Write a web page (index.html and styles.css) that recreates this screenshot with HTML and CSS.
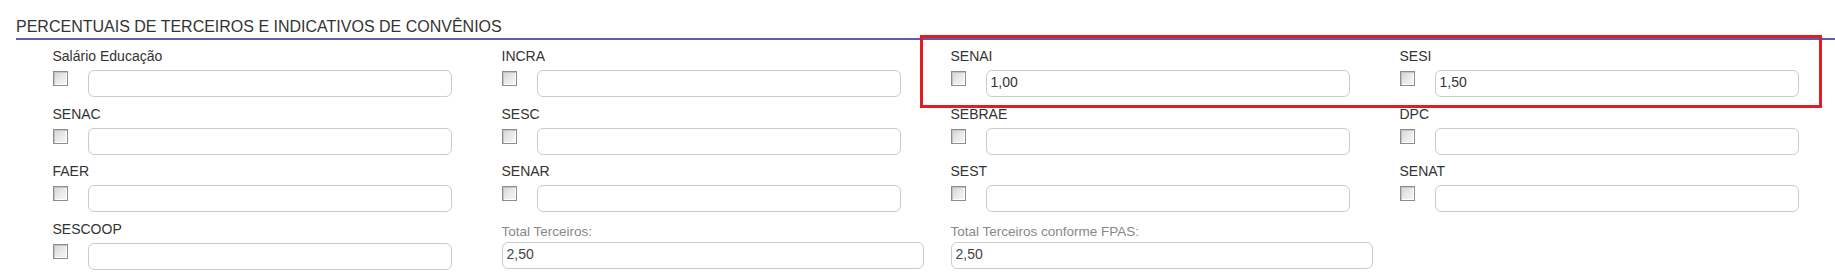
FILE: index.html
```html
<!DOCTYPE html>
<html lang="pt-BR">
<head>
  <meta charset="UTF-8">
  <title>Percentuais de Terceiros</title>
  <link rel="stylesheet" href="styles.css">
</head>
<body>
  <h2 class="titulo">PERCENTUAIS DE TERCEIROS E INDICATIVOS DE CONVÊNIOS</h2>

  <div class="campos">
    <div class="campo">
      <label>Salário Educação</label>
      <div class="linha"><input type="checkbox" class="marca"><input type="text" class="valor"></div>
    </div>
    <div class="campo">
      <label>INCRA</label>
      <div class="linha"><input type="checkbox" class="marca"><input type="text" class="valor"></div>
    </div>
    <div class="campo">
      <label>SENAI</label>
      <div class="linha"><input type="checkbox" class="marca"><input type="text" class="valor" value="1,00"></div>
    </div>
    <div class="campo">
      <label>SESI</label>
      <div class="linha"><input type="checkbox" class="marca"><input type="text" class="valor" value="1,50"></div>
    </div>

    <div class="campo">
      <label>SENAC</label>
      <div class="linha"><input type="checkbox" class="marca"><input type="text" class="valor"></div>
    </div>
    <div class="campo">
      <label>SESC</label>
      <div class="linha"><input type="checkbox" class="marca"><input type="text" class="valor"></div>
    </div>
    <div class="campo">
      <label>SEBRAE</label>
      <div class="linha"><input type="checkbox" class="marca"><input type="text" class="valor"></div>
    </div>
    <div class="campo">
      <label>DPC</label>
      <div class="linha"><input type="checkbox" class="marca"><input type="text" class="valor"></div>
    </div>

    <div class="campo">
      <label>FAER</label>
      <div class="linha"><input type="checkbox" class="marca"><input type="text" class="valor"></div>
    </div>
    <div class="campo">
      <label>SENAR</label>
      <div class="linha"><input type="checkbox" class="marca"><input type="text" class="valor"></div>
    </div>
    <div class="campo">
      <label>SEST</label>
      <div class="linha"><input type="checkbox" class="marca"><input type="text" class="valor"></div>
    </div>
    <div class="campo">
      <label>SENAT</label>
      <div class="linha"><input type="checkbox" class="marca"><input type="text" class="valor"></div>
    </div>

    <div class="campo">
      <label>SESCOOP</label>
      <div class="linha"><input type="checkbox" class="marca"><input type="text" class="valor"></div>
    </div>
    <div class="campo total">
      <label>Total Terceiros:</label>
      <input type="text" class="valor" value="2,50" readonly>
    </div>
    <div class="campo total">
      <label>Total Terceiros conforme FPAS:</label>
      <input type="text" class="valor" value="2,50" readonly>
    </div>
  </div>

  <!-- destaque em vermelho -->
  <div class="destaque"></div>
</body>
</html>
```

FILE: styles.css
```css
body {
  margin: 0;
  padding-top: 17px;
  font-family: "Liberation Sans", Arial, sans-serif;
  color: #333;
  background-color: #fff;
}

.titulo {
  margin: 0 0 0 16px;
  padding-bottom: 1px;
  font-size: 16px;
  font-weight: normal;
  line-height: 20px;
  color: #333;
  border-bottom: 2px solid #5c5cab;
}

.campos {
  display: grid;
  grid-template-columns: repeat(4, 449px);
  row-gap: 6.5px;
  margin: 6px 0 0 52.5px;
}

.campo label {
  display: block;
  font-size: 14px;
  line-height: 20px;
  margin-bottom: 4px;
}

.linha {
  display: flex;
  align-items: flex-start;
  gap: 20px;
}

.marca {
  appearance: none;
  -webkit-appearance: none;
  width: 15px;
  height: 15px;
  margin: 1px 0 0 0;
  border: 1px solid #8d8d8d;
  background: linear-gradient(135deg, #d2d2d2 0%, #e9e9e9 50%, #f8f8f8 100%);
  box-shadow: inset 1px 1px 0 #c4c4c4, inset -1px -1px 0 #fff;
}

.valor {
  box-sizing: border-box;
  width: 364px;
  height: 27px;
  margin: 0;
  padding: 0 4px 3px 4px;
  border: 1px solid #ccc;
  border-radius: 6px;
  font-family: "Liberation Sans", Arial, sans-serif;
  font-size: 14px;
  color: #333;
  background-color: #fff;
}

.total label {
  font-size: 13.5px;
  color: #888;
  margin: 3px 0 0 0;
}

.total .valor {
  width: 422px;
  color: #444;
}

.destaque {
  position: absolute;
  left: 920px;
  top: 35px;
  width: 896px;
  height: 67px;
  border: 3px solid #e31b23;
}
```
